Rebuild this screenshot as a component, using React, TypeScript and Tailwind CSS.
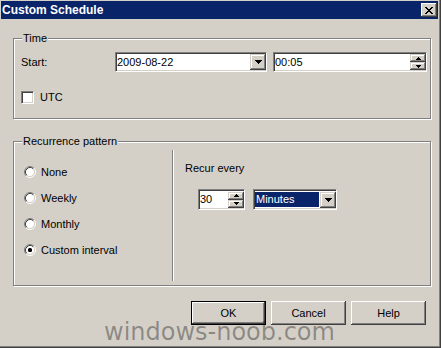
import type { ReactNode } from "react";

const FONT = { fontFamily: '"Liberation Sans", Arial, sans-serif' };

const SUNKEN =
  "border border-t-[#808080] border-l-[#808080] border-b-white border-r-white shadow-[inset_1px_1px_0_#404040,inset_-1px_-1px_0_#d4d0c8]";

const RAISED =
  "bg-[#d4d0c8] shadow-[inset_-1px_-1px_0_#404040,inset_1px_1px_0_#d4d0c8,inset_-2px_-2px_0_#808080,inset_2px_2px_0_#ffffff]";

const BUTTON =
  "bg-[#d4d0c8] shadow-[inset_-1px_-1px_0_#404040,inset_1px_1px_0_#ffffff,inset_-2px_-2px_0_#808080,inset_2px_2px_0_#d4d0c8]";

function DownArrow({ small = false }: { small?: boolean }) {
  if (small) {
    return (
      <svg width="5" height="3" viewBox="0 0 5 3">
        <path d="M0 0h5v1H0zM1 1h3v1H1zM2 2h1v1H2z" fill="#000" />
      </svg>
    );
  }
  return (
    <svg width="7" height="4" viewBox="0 0 7 4">
      <path d="M0 0h7v1H0zM1 1h5v1H1zM2 2h3v1H2zM3 3h1v1H3z" fill="#000" />
    </svg>
  );
}

function UpArrow() {
  return (
    <svg width="5" height="3" viewBox="0 0 5 3">
      <path d="M2 0h1v1H2zM1 1h3v1H1zM0 2h5v1H0z" fill="#000" />
    </svg>
  );
}

function DropButton() {
  return (
    <div className={`${RAISED} flex h-[16px] w-[16px] shrink-0 items-center justify-center`}>
      <DownArrow />
    </div>
  );
}

function SpinButtons() {
  return (
    <div className="flex w-[16px] shrink-0 flex-col">
      <div className={`${RAISED} flex h-[8px] items-center justify-center`}>
        <UpArrow />
      </div>
      <div className={`${RAISED} flex h-[8px] items-center justify-center`}>
        <DownArrow small />
      </div>
    </div>
  );
}

function Radio({ checked = false }: { checked?: boolean }) {
  return (
    <svg width="12" height="12" viewBox="0 0 12 12" className="shrink-0">
      <circle cx="6" cy="6" r="4.5" fill="#fff" />
      <path d="M2.11 9.89A5.5 5.5 0 0 1 9.89 2.11" stroke="#808080" fill="none" />
      <path d="M9.89 2.11A5.5 5.5 0 0 1 2.11 9.89" stroke="#fff" fill="none" />
      <path d="M2.82 9.18A4.5 4.5 0 0 1 9.18 2.82" stroke="#404040" fill="none" />
      <path d="M9.18 2.82A4.5 4.5 0 0 1 2.82 9.18" stroke="#d4d0c8" fill="none" />
      {checked && <rect x="4" y="4" width="4" height="4" rx="1.5" fill="#000" />}
    </svg>
  );
}

function GroupBox({
  label,
  className,
  children,
}: {
  label: string;
  className: string;
  children: ReactNode;
}) {
  return (
    <div
      className={`relative border border-[#808080] shadow-[1px_1px_0_#ffffff,inset_1px_1px_0_#ffffff] ${className}`}
    >
      <span className="absolute left-[8px] top-[-8px] bg-[#d4d0c8] px-[1px] leading-[14px]">
        {label}
      </span>
      {children}
    </div>
  );
}

function RadioRow({ label, checked }: { label: string; checked?: boolean }) {
  return (
    <div className="flex h-[26px] items-center gap-[5px]">
      <Radio checked={checked} />
      <span>{label}</span>
    </div>
  );
}

export default function App() {
  return (
    <div
      className="relative h-[348px] w-[441px] overflow-hidden bg-[#d4d0c8] pl-[1px] pt-[1px] text-[11px] text-black shadow-[inset_-1px_-1px_0_#404040,inset_-2px_-2px_0_#808080]"
      style={FONT}
    >
      {/* title bar */}
      <div className="flex h-[18px] w-[437px] items-center justify-between bg-[#0a246a] pl-[1px] pr-[1px]">
        <span className="text-[12px] font-bold text-white">Custom Schedule</span>
        <div className={`${BUTTON} flex h-[14px] w-[16px] items-center justify-center`}>
          <svg width="8" height="7" viewBox="0 0 8 7">
            <path
              d="M0 0h2v1H0zM6 0h2v1H6zM1 1h2v1H1zM5 1h2v1H5zM2 2h4v1H2zM3 3h2v1H3zM2 4h4v1H2zM1 5h2v1H1zM5 5h2v1H5zM0 6h2v1H0zM6 6h2v1H6z"
              fill="#000"
            />
          </svg>
        </div>
      </div>

      {/* Time */}
      <GroupBox label="Time" className="ml-[12px] mt-[19px] h-[81px] w-[418px] pt-[13px]">
        <div className="flex h-[20px] items-center pl-[7px]">
          <span className="w-[94px]">Start:</span>
          <div className={`${SUNKEN} flex h-[20px] w-[152px] items-center bg-white`}>
            <span className="flex-1 pl-[1px]">2009-08-22</span>
            <DropButton />
          </div>
          <div className={`${SUNKEN} ml-[6px] flex h-[20px] w-[154px] items-center bg-white`}>
            <span className="flex-1 pl-[1px]">00:05</span>
            <SpinButtons />
          </div>
        </div>
        <div className="mt-[17px] flex items-center gap-[6px] pl-[7px]">
          <div className={`${SUNKEN} h-[13px] w-[13px] bg-white`} />
          <span>UTC</span>
        </div>
      </GroupBox>

      {/* Recurrence pattern */}
      <GroupBox label="Recurrence pattern" className="ml-[12px] mt-[22px] flex h-[145px] w-[418px]">
        <div className="w-[158px] pl-[10px] pt-[17px]">
          <RadioRow label="None" />
          <RadioRow label="Weekly" />
          <RadioRow label="Monthly" />
          <RadioRow label="Custom interval" checked />
        </div>
        <div className="mt-[8px] h-[131px] w-[2px] border-l border-r border-l-[#808080] border-r-white" />
        <div className="pl-[11px] pt-[19px]">
          <div className="leading-[14px]">Recur every</div>
          <div className="ml-[13px] mt-[14px] flex items-center gap-[8px]">
            <div className={`${SUNKEN} flex h-[21px] w-[47px] items-center bg-white`}>
              <span className="flex-1 pl-[1px]">30</span>
              <SpinButtons />
            </div>
            <div className={`${SUNKEN} flex h-[21px] w-[84px] items-center gap-[1px] bg-white pl-[1px]`}>
              <span className="flex h-[15px] flex-1 items-center bg-[#0a246a] pl-[1px] text-white">
                Minutes
              </span>
              <DropButton />
            </div>
          </div>
        </div>
      </GroupBox>

      {/* buttons */}
      <div className="ml-[190px] mt-[15px] flex gap-[5px]">
        <div className="h-[24px] w-[75px] border border-black">
          <div className={`${BUTTON} flex h-full w-full items-center justify-center`}>OK</div>
        </div>
        <div className={`${BUTTON} flex h-[24px] w-[75px] items-center justify-center`}>Cancel</div>
        <div className={`${BUTTON} flex h-[24px] w-[75px] items-center justify-center`}>Help</div>
      </div>

      {/* watermark */}
      <span
        className="absolute left-[104px] top-[317px] text-[24px] leading-[30px] text-black/35"
        style={{ fontFamily: '"DejaVu Sans", Verdana, sans-serif' }}
      >
        windows-noob.com
      </span>
    </div>
  );
}
